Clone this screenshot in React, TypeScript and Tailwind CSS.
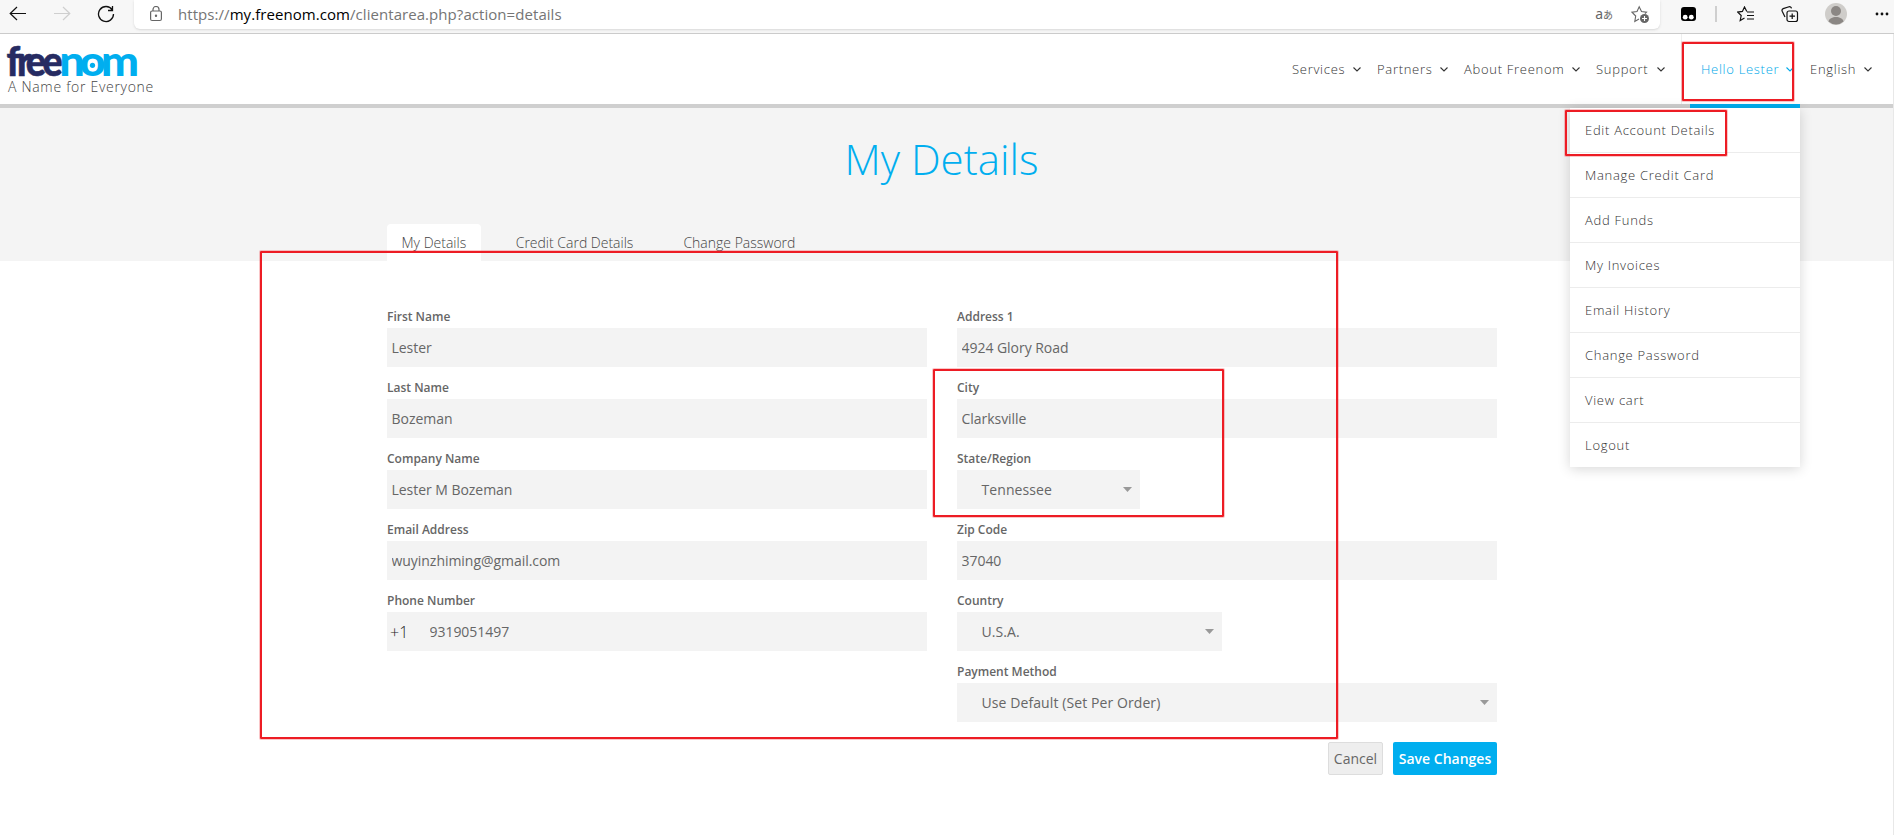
import React from "react";

const contactFields = [
  { label: "First Name", value: "Lester" },
  { label: "Last Name", value: "Bozeman" },
  { label: "Company Name", value: "Lester M Bozeman" },
  { label: "Email Address", value: "wuyinzhiming@gmail.com" },
];

const navItems = [
  { name: "Services", width: "w-[69px]" },
  { name: "Partners", width: "w-[71px]" },
  { name: "About Freenom", width: "w-[116px]" },
  { name: "Support", width: "w-[69px]" },
];

const accountMenu = [
  "Edit Account Details",
  "Manage Credit Card",
  "Add Funds",
  "My Invoices",
  "Email History",
  "Change Password",
  "View cart",
  "Logout",
];

const Chevron: React.FC = () => (
  <svg width="8" height="5" viewBox="0 0 8 5" fill="none" stroke="currentColor" strokeWidth="1.1">
    <path d="M0.5 0.5 4 4 7.5 0.5" />
  </svg>
);

const BrowserBar: React.FC = () => (
  <div className="flex h-[34px] border-b border-[#cbcbcb] bg-[#f7f7f7]">
    <div className="flex w-[134px] gap-[26px] pl-[9px] pt-[5px]">
      <svg width="18" height="18" viewBox="0 0 18 18" fill="none" stroke="#111" strokeWidth="1.2">
        <path d="M17 8.500H1.500M8 2 1.200 8.500 8 15" />
      </svg>
      <svg width="18" height="18" viewBox="0 0 18 18" fill="none" stroke="#cfcfcf" strokeWidth="1.2">
        <path d="M1 8.500h15.500M10 2l6.800 6.500L10 15" />
      </svg>
      <svg width="18" height="18" viewBox="0 0 18 18" fill="none" stroke="#111" strokeWidth="1.3">
        <path d="M15.200 4.800A7.500 7.500 0 1 0 16.500 9M15.500 1v4.500H11" />
      </svg>
    </div>
    <div className="flex h-[29px] w-[1526px] rounded-b-md bg-white pl-4 shadow-sm">
      <svg className="mt-[6px]" width="12" height="16" viewBox="0 0 12 16" fill="none" stroke="#666" strokeWidth="1.2">
        <rect x="0.600" y="5" width="10.800" height="9.500" rx="1.500" />
        <path d="M3 5V3.500a3 3 0 0 1 6 0V5" />
        <circle cx="6" cy="9.700" r="0.600" fill="#666" />
      </svg>
      <span className="ml-4 mt-[2px] text-[15px] leading-[24px] tracking-[0.06px] text-[#757575]">
        https://<span className="text-black">my.freenom.com</span>/clientarea.php?action=details
      </span>
      <span className="ml-auto mt-[1px] font-['Noto_Sans','Noto_Sans_CJK_JP',sans-serif] leading-[24px] text-[#666]">
        <span className="text-[14px]">a</span>
        <span className="text-[10px]">あ</span>
      </span>
      <svg className="ml-[18px] mr-[10px] mt-[5px]" width="19" height="19" viewBox="0 0 19 19" fill="none" stroke="#666" strokeWidth="1.1">
        <path d="M8 14 3.800 16.500l.9-5.500L1 7.200l5-.7L8.200 1.800l2.300 4.700 5 .7-1.500 1.500" />
        <circle cx="13.500" cy="13.500" r="4.500" fill="#666" stroke="none" />
        <path d="M13.500 11v5M11 13.500h5" stroke="#fff" />
      </svg>
    </div>
    <div className="flex flex-1 pl-[21px]">
      <svg className="mt-[7px]" width="15" height="14" viewBox="0 0 15 14">
        <rect width="15" height="14" rx="3" fill="#000" />
        <circle cx="4.200" cy="10.200" r="2.400" fill="#fff" />
        <circle cx="10.300" cy="10.200" r="2.400" fill="#fff" />
      </svg>
      <span className="ml-[19px] mt-[6px] h-4 w-[2px] bg-[#cfcfcf]" />
      <svg className="ml-[20px] mt-[6px]" width="18" height="17" viewBox="0 0 18 17" fill="none" stroke="#111" strokeWidth="1.2">
        <path d="M9.800 5.500 7.500 1 5.400 5.400l-4.600.7L4.200 9.500 3.200 14.500l4.300-2.400M10 6h7M10 9.500h7M10 13h7" />
      </svg>
      <svg className="ml-[26px] mt-[6px]" width="18" height="17" viewBox="0 0 18 17" fill="none" stroke="#111" strokeWidth="1.2">
        <rect x="6" y="5" width="10.500" height="10.500" rx="2" />
        <path d="M11.200 7.500V13M8.500 10.200H14M4 11 1.200 5.200a2 2 0 0 1 1-2.600L8 .8a2 2 0 0 1 2.500 1.500" />
      </svg>
      <svg className="ml-[26px] mt-[3px]" width="22" height="22" viewBox="0 0 22 22">
        <circle cx="11" cy="11" r="11" fill="#cfcdca" />
        <circle cx="11" cy="8" r="5" fill="#8b8784" />
        <path d="M3.500 18.500c1-6 14-6 15 0a11 11 0 0 1-15 0Z" fill="#8b8784" />
      </svg>
      <svg className="ml-[28px] mt-[12px]" width="14" height="4" viewBox="0 0 14 4" fill="#111">
        <circle cx="2" cy="2" r="1.400" />
        <circle cx="7" cy="2" r="1.400" />
        <circle cx="12" cy="2" r="1.400" />
      </svg>
    </div>
  </div>
);

const Logo: React.FC = () => (
  <div className="w-[170px] pl-[7px] pt-[10px]">
    <svg className="overflow-visible" width="134" height="38" viewBox="0 0 134 38" fontFamily="Lato, sans-serif" fontSize="41" fontWeight="900">
      <text transform="scale(0.92 1)" x="-0.500 11 20.500 38.500" y="32" fill="#262b62" stroke="#262b62" strokeWidth="0.600">
        free
      </text>
      <text transform="scale(1.1 1)" x="47.500 65.900 85.500" y="32" fill="#00aeef">
        nom
      </text>
      <circle cx="85.500" cy="21.300" r="2.600" fill="#00aeef" />
    </svg>
    <div className="-mt-[4px] ml-px whitespace-nowrap text-[14px] font-light leading-[18px] tracking-[0.7px] text-[#444]">
      A Name for Everyone
    </div>
  </div>
);

const Header: React.FC = () => (
  <div className="flex h-[74px] border-b-4 border-[#cfcfcf] bg-white text-[13px] font-light tracking-[0.71px] text-[#333]">
    <Logo />
    <div className="ml-auto flex h-[70px] leading-[70px]">
      {navItems.map((item) => (
        <div key={item.name} className={`box-content flex items-center justify-between whitespace-nowrap pr-4 ${item.width}`}>
          {item.name}
          <Chevron />
        </div>
      ))}
      <div className="w-[9px] border-l border-[#eee]" />
      <div className="relative flex h-[74px] w-[110px] items-center justify-between border-b-4 border-[#00aeef] pl-[11px] pr-[6px] text-[#00a9e9]">
        Hello Lester
        <Chevron />
        <div className="absolute right-0 top-[74px] z-10 w-[230px] bg-white text-[#333] shadow-[0_2px_12px_rgba(0,0,0,0.16)]">
          {accountMenu.map((item) => (
            <div key={item} className="h-[45px] border-b border-[#ececec] pl-[15px] leading-[44px] last:h-[44px] last:border-0">
              {item}
            </div>
          ))}
        </div>
      </div>
      <div className="mr-[21px] flex w-[72px] items-center justify-between pl-[10px]">
        English
        <Chevron />
      </div>
    </div>
  </div>
);

const Field: React.FC<{ label: string; children: React.ReactNode; width?: string }> = ({
  label,
  children,
  width = "w-full",
}) => (
  <div className="h-[71px]">
    <div className="h-[20px] text-[12px] font-semibold leading-[18px] text-[#666]">{label}</div>
    <div className={`flex h-[39px] items-center bg-[#f3f3f3] text-[14px] text-[#666] ${width}`}>
      {children}
    </div>
  </div>
);

const Input: React.FC<{ value: string }> = ({ value }) => (
  <input className="h-full w-full bg-transparent px-[4.5px] tracking-[-0.04px] outline-none" defaultValue={value} />
);

const Select: React.FC<{ value: string }> = ({ value }) => (
  <div className="flex w-full items-center justify-between pl-[24.5px] pr-[8.5px] tracking-[0.09px]">
    {value}
    <svg width="9" height="5" viewBox="0 0 9 5" fill="#999">
      <path d="M0 0h9L4.500 5Z" />
    </svg>
  </div>
);

// red marker frame laid over the page
const Mark: React.FC<{ className: string }> = ({ className }) => (
  <div className={`pointer-events-none absolute z-20 rounded-[1px] border-2 border-[#ed1c24] shadow-[0_0_0_1px_rgba(237,28,36,0.25)] ${className}`} />
);

const App: React.FC = () => {
  return (
    <div className="relative h-[835px] w-[1894px] overflow-hidden bg-white font-['Open_Sans',sans-serif]">
      <BrowserBar />
      <div className="h-[801px] border-r border-[#e8e8e8]">
        <Header />
        <div className="flex h-[153px] flex-col justify-between bg-[#f4f4f4]">
          <h1 className="pr-[10px] pt-[22px] text-center text-[42px] font-light leading-[57px] text-[#00aeef]">
            My Details
          </h1>
          <div className="ml-[387px] flex h-[37px] gap-5 text-[14px] font-light leading-[38px] text-[#444]">
            <div className="rounded-t bg-white px-[14.5px]">My Details</div>
            <div className="px-[15px]">Credit Card Details</div>
            <div className="px-[15px]">Change Password</div>
          </div>
        </div>
        <form className="ml-[387px] w-[1110px] pt-[47px]" onSubmit={(e) => e.preventDefault()}>
          <div className="grid grid-cols-2 gap-x-[30px]">
            <div>
              {contactFields.map((item) => (
                <Field key={item.label} label={item.label}>
                  <Input value={item.value} />
                </Field>
              ))}
              <Field label="Phone Number">
                <span className="w-[38px] shrink-0 pl-[3px] text-[16px] font-light text-[#222]">+1</span>
                <Input value="9319051497" />
              </Field>
            </div>
            <div>
              <Field label="Address 1">
                <Input value="4924 Glory Road" />
              </Field>
              <Field label="City">
                <Input value="Clarksville" />
              </Field>
              <Field label="State/Region" width="w-[183px]">
                <Select value="Tennessee" />
              </Field>
              <Field label="Zip Code">
                <Input value="37040" />
              </Field>
              <Field label="Country" width="w-[265px]">
                <Select value="U.S.A." />
              </Field>
              <Field label="Payment Method">
                <Select value="Use Default (Set Per Order)" />
              </Field>
            </div>
          </div>
          <div className="mt-[8px] flex justify-end gap-[10px] text-[14px]">
            <button className="h-[33px] w-[55px] rounded-[2px] border border-[#ddd] bg-[#eee] text-[#666]">
              Cancel
            </button>
            <button className="h-[33px] w-[104px] rounded-[2px] bg-[#00aeef] font-semibold text-white">
              Save Changes
            </button>
          </div>
        </form>
      </div>
      <Mark className="left-[1682px] top-[42px] h-[59px] w-[112px]" />
      <Mark className="left-[1565px] top-[110px] h-[46px] w-[162px]" />
      <Mark className="left-[260px] top-[251px] h-[488px] w-[1078px]" />
      <Mark className="left-[933px] top-[369px] h-[148px] w-[291px]" />
    </div>
  );
};

export default App;
